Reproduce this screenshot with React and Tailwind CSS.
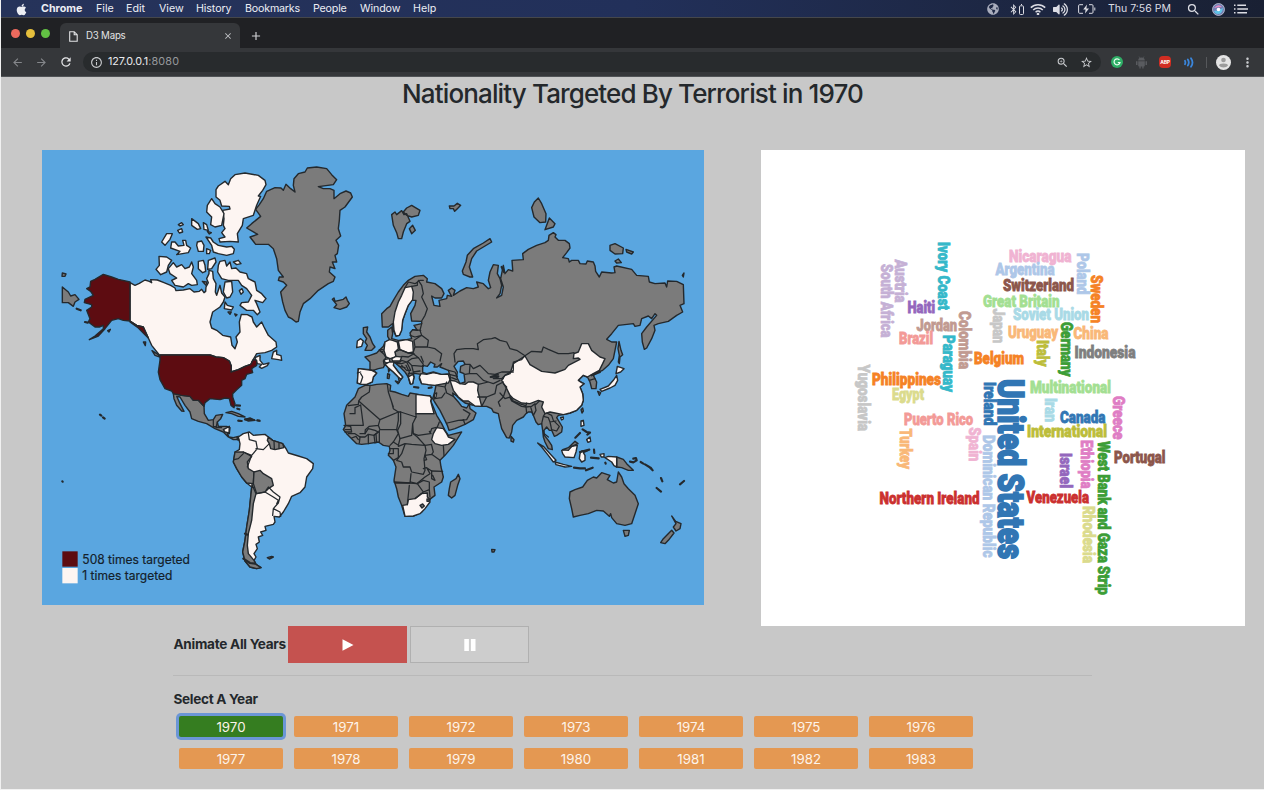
import React from "react";
import { FaApple, FaGlobeAmericas, FaBluetoothB, FaVolumeUp } from "react-icons/fa";
import {
  MdArrowBack, MdArrowForward, MdRefresh, MdInfoOutline, MdZoomIn, MdStarBorder, MdMoreVert, MdClose, MdAdd, MdSearch,
} from "react-icons/md";

/* Coastline points are kept in regional frames; each letter names a frame's origin. */
const FRAMES = { A: [0, 0], B: [540, 0], C: [900, 255], D: [1380, 0], E: [270, 585], F: [870, 675], G: [1380, 705] };

function toPath(src, closed) {
  return src
    .split("|")
    .map((part) => {
      let frame = FRAMES.A;
      const pts = [];
      part.trim().split(/\s+/).forEach((tok) => {
        if (/^[A-G]$/.test(tok)) {
          frame = FRAMES[tok];
          return;
        }
        const [x, y] = tok.split(",").map(Number);
        pts.push(`${x + frame[0]},${y + frame[1]}`);
      });
      return "M" + pts.join("L") + (closed ? "Z" : "");
    })
    .join("");
}

const EURASIA =
  "C 127,290 125,250 140,235 150,228 160,210 175,185 190,165 205,150 225,138 250,135 262,145 260,155 285,160 305,175 312,190 305,203 285,203 275,197 282,225 300,228 297,210 320,205 322,195 335,198 325,180 335,173 345,180 340,195 360,182 380,172 400,175 415,170 410,155 430,160 445,175 452,172 445,150 450,125 460,103 475,105 472,130 480,145 485,165 480,190 470,203 485,195 490,170 482,145 485,130 490,105 495,130 505,118 518,122 " +
  "D 38,372 36,345 70,343 68,325 85,312 110,300 135,292 145,285 147,270 160,262 168,268 165,275 175,285 195,285 208,295 210,308 200,322 188,337 205,340 208,350 215,345 235,345 240,355 258,356 262,347 280,350 285,362 287,378 298,395 305,380 335,383 345,382 342,365 350,362 395,372 410,390 445,393 448,410 465,415 495,413 500,425 503,407 530,408 550,418 552,475 540,480 548,500 530,510 505,528 475,535 462,540 465,555 455,580 440,608 433,612 427,590 425,565 440,545 470,510 465,505 455,520 445,512 425,520 420,540 405,543 400,535 355,540 335,565 320,582 335,590 350,590 345,615 340,640 325,660 308,675 295,680 280,690 290,710 288,730 275,730 270,710 265,700 262,695 250,690 235,705 245,712 252,715 240,725 248,745 " +
  "G 250,60 245,75 230,90 210,98 190,103 175,105 170,112 187,140 185,155 170,165 163,168 155,150 148,150 140,140 132,150 133,165 145,180 155,195 157,208 145,205 135,185 130,170 128,150 125,130 115,133 108,125 100,105 95,95 85,95 78,100 70,110 50,120 38,135 35,155 28,173 20,172 " +
  "F 515,175 508,145 505,130 490,125 485,115 470,108 450,108 430,105 405,98 392,88 378,75 368,68 370,78 385,95 395,108 410,113 418,100 420,115 438,128 430,148 405,162 375,175 357,180 352,165 345,150 330,120 314,95 308,85 314,65 318,45 " +
  "C 285,465 265,463 245,460 238,445 243,432 228,430 220,430 222,440 218,460 210,460 205,440 195,425 180,410 165,397 155,397 160,405 175,425 188,440 183,447 178,455 175,440 160,425 145,412 135,402 130,412 115,415 100,420 110,428 100,440 95,455 80,462 65,462 52,458 55,415 90,418 90,395 75,380 90,375 110,368 118,360 130,348 135,335 150,330 143,318 143,300 155,290 158,310 155,325 175,330 200,328 215,325 210,308 218,298 232,300 222,285 245,280 245,273 215,272 212,250 225,225 228,210 215,210 205,225 195,250 188,270 185,295 178,315 168,317 160,300 158,280 145,290";

const AFRICA =
  "F 105,45 85,55 75,80 50,105 42,130 47,165 40,178 50,190 65,205 80,220 95,222 115,220 145,215 160,225 178,228 180,240 175,255 190,270 198,290 192,330 200,355 205,380 215,405 225,438 250,437 275,425 290,405 302,385 315,375 312,350 335,335 340,320 333,290 330,270 345,255 370,225 395,185 375,190 355,195 345,180 335,160 320,135 310,110 302,92 306,84 300,76 285,77 265,72 240,68 235,78 215,72 195,65 180,62 182,45 170,40 140,42 125,45";

const CANADA =
  "A 270,412 285,420 298,414 315,404 328,408 335,412 332,403 352,404 372,412 392,420 405,428 408,436 430,434 450,430 462,440 478,438 485,432 492,442 497,438 498,425 505,412 500,400 507,385 507,375 518,378 520,400 528,415 526,440 530,450 540,420 545,443 555,455 550,470 540,485 518,500 510,530 515,548 530,555 548,570 572,575 576,600 585,610 592,590 588,575 600,560 598,530 604,507 622,508 636,515 640,530 650,545 665,530 672,545 685,570 708,590 710,605 695,615 675,622 650,625 635,650 660,635 650,655 642,645 632,657 615,663 595,673 573,680 574,663 568,647 550,637 528,635 510,629 358,629 335,600 325,578 310,545 290,540 270,527";

const GREENLAND =
  "B 80,248 95,235 122,213 107,192 118,178 130,160 140,138 165,127 183,128 190,135 198,117 212,130 225,140 220,120 222,100 235,85 255,80 262,68 290,65 320,70 335,88 350,103 340,118 295,124 310,130 330,130 342,135 342,160 360,145 378,137 392,143 397,155 375,185 360,195 358,225 355,250 362,272 348,285 356,300 352,325 345,330 350,350 337,350 345,370 330,365 328,380 345,395 340,408 325,415 295,435 270,460 250,475 240,500 235,528 228,530 215,520 205,515 195,495 188,470 182,440 200,420 190,410 175,405 178,395 190,395 175,375 170,340 160,310 145,297 107,297 90,275 113,267";

const ARCTIC_ISLANDS = [
  "A 528,133 535,122 555,108 565,118 572,100 585,88 615,83 655,90 675,105 678,118 668,135 655,152 662,153 650,180 645,195 640,210 610,220 607,240 592,265 595,290 570,288 540,290 537,280 555,275 545,262 555,250 550,240 552,220 548,195 570,191 568,183 545,182 540,165 528,155",
  "A 515,160 525,175 540,185 552,205 545,240 525,245 512,238 515,215 500,200 502,180",
  "A 498,275 512,278 520,290 535,300 560,305 575,303 583,312 580,325 560,330 535,325 520,320 515,300",
  "A 455,220 475,235 482,250 472,252 455,240 | A 490,232 500,238 505,255 492,252 | A 502,258 514,262 508,266 | A 415,238 425,232 430,238 420,242 | A 413,255 425,250 428,260 418,263",
  "A 365,290 380,265 397,265 390,282 375,300 | A 395,290 405,290 415,302 432,300 428,285 437,285 440,300 452,308 445,322 410,328 420,318 392,308 | A 472,290 485,287 492,300 490,318 475,318 470,300 | A 500,310 512,315 508,325 500,325",
  "A 357,333 380,335 395,345 385,360 380,380 362,388 348,372 358,360",
  "A 385,370 400,352 410,365 425,358 435,370 448,365 455,350 460,365 455,385 470,405 472,418 455,420 445,415 430,425 405,420 395,405 410,398 390,385",
  "A 475,348 490,345 495,360 497,378 488,382 475,370 | A 505,345 525,338 528,350 515,370 503,372 | A 487,408 500,410 498,420",
  "A 540,348 555,345 560,362 570,350 575,370 588,368 600,380 620,385 625,400 645,410 650,435 665,445 678,460 668,472 645,465 650,475 660,500 652,508 640,495 620,495 600,480 605,472 625,470 635,450 620,430 605,420 595,405 565,405 545,400 533,380 535,360",
  "A 580,350 595,345 603,355 590,358 | A 555,410 575,408 578,440 570,455 560,458 550,440 | A 598,436 606,430 610,440 603,447 | A 555,470 562,480 580,485 575,494 553,490 | A 564,500 574,500 570,507 | A 584,506 591,508 587,512",
];

const SOUTH_AMERICA =
  "E 325,290 340,280 358,275 370,285 405,282 415,290 428,300 458,310 468,325 475,338 505,347 530,355 550,370 548,385 530,410 525,440 510,457 485,468 475,490 460,515 448,530 432,528 435,545 430,552 405,558 408,570 392,575 398,585 385,590 388,605 378,612 382,625 372,640 378,650 372,660 378,672 393,682 380,685 360,680 345,662 338,635 345,600 350,560 358,510 365,440 350,428 335,410 320,385 310,365 315,335 328,328 330,310";

const GREY = [
  EURASIA,
  AFRICA,
  GREENLAND,
  "B 337,462 342,458 345,468 370,462 378,455 382,465 388,475 380,485 360,492 342,487 350,478",
  "B 515,208 525,200 530,208 545,196 552,208 560,205 570,228 560,235 550,260 545,280 535,280 530,262 520,240 | B 550,200 560,188 575,180 600,195 595,210 575,215 560,210 | B 568,250 578,240 586,255 575,265",
  "A 1228,182 1242,182 1252,174 1262,180 1252,190 1244,198 1240,190 1230,190",
  "C 390,140 370,132 367,122 378,95 382,75 400,55 430,38 450,25 455,35 435,47 410,62 395,85 388,110 398,140",
  "D 115,158 125,175 138,205 137,230 120,232 102,215 95,187 103,170 | D 148,218 165,235 160,245 135,253 | D 330,300 345,295 370,308 368,325 345,326 330,315 | D 378,312 400,320 395,326 380,320 | D 345,347 355,341 364,352 350,353 | D 547,390 552,383 550,395",
  "D 357,588 363,615 368,628 360,635 358,655 355,650 358,630 354,610",
  "C 70,292 83,290 80,305 90,320 98,340 105,350 95,360 75,360 82,345 75,335 80,325 70,310",
  "C 143,430 149,432 147,445 142,444 | C 145,415 149,418 146,425 | C 166,452 178,456 174,460",
  "F 385,312 390,325 383,345 375,375 365,383 355,375 358,355 362,335 378,325",
  "F 485,537 495,538 492,545 486,545",
  "G 210,335 225,328 248,320 262,300 280,290 290,293 305,277 330,285 322,298 340,308 350,305 355,275 365,290 372,310 385,325 405,345 415,370 405,400 395,430 375,435 350,430 335,412 332,400 328,408 310,392 290,390 265,400 240,405 220,410 215,385 208,355",
  "G 370,450 388,450 385,465 375,468 | G 515,407 527,423 543,430 540,445 528,452 520,440 528,430 | G 515,450 522,458 505,480 495,490 482,487 490,475",
  "G 350,230 370,237 380,250 400,270 385,270 365,262 350,260 | G 33,168 42,178 40,185 33,182 | G 243,88 248,83 250,92 246,98",
  "E 130,160 155,165 180,168 190,180 205,180 215,190 222,198 223,220 235,240 250,238 258,225 278,222 272,235 262,245 265,258 290,258 300,262 298,280 292,280 297,290 310,292 325,288 325,298 310,298 295,290 280,275 255,265 230,250 205,243 185,235 180,215 165,195 150,170 140,168 150,190 162,213 155,212 140,195 132,175",
  "E 288,217 305,213 325,220 345,230 325,228 305,220 | E 345,237 360,233 375,240 355,242 | E 382,240 390,242 | E 325,241 335,242 | E 412,652 425,648 430,650 418,656",
  "A 67,425 85,440 92,452 105,448 117,462 105,470 100,483 85,472 67,472 | A 67,383 78,386 75,393 66,393",
  "A 310,590 317,590 316,601 | A 336,616 355,628 362,636 345,630",
];

const PALE = [
  CANADA,
  ...ARCTIC_ISLANDS,
  SOUTH_AMERICA,
  "E 375,52 390,45 390,60 400,72 417,68 412,76 395,84 388,80 395,72 382,70 | E 425,55 430,35 440,30 440,42 453,46 455,60 445,58",
  "E 280,268 298,258 297,278 285,275",
  "F 258,72 300,77 304,84 302,92 312,130 258,130 | F 314,70 320,68 318,80 312,86",
  "F 320,172 340,175 350,190 355,200 375,207 355,222 335,225 315,220 305,208 310,190",
  "F 218,405 232,403 235,388 255,385 275,370 292,368 292,380 298,385 300,395 285,415 270,430 250,437 225,438",
  "C 238,440 243,430 260,432 280,427 305,432 325,432 330,448 325,458 300,462 285,465 265,463 245,460",
  "C 330,450 345,452 360,460 375,462 385,455 400,455 415,462 413,480 418,500 425,528 405,527 385,512 370,512 355,500 340,480 335,465",
  "C 195,172 215,168 220,185 218,208 205,225 195,250 188,270 185,300 178,315 168,317 162,300 160,275 165,245 175,215 185,195",
  "C 135,335 148,328 158,330 172,335 175,355 165,365 168,380 150,385 138,380 132,360 | C 175,332 200,328 218,333 220,365 205,368 180,358",
  "C 155,385 168,378 185,380 180,392 158,392 | C 133,388 148,385 150,396 135,398 | C 118,358 130,358 128,366",
  "C 135,402 148,395 162,395 160,405 175,425 188,440 183,447 175,440 160,425 145,412 | C 205,440 218,432 222,440 218,460 212,462",
  "C 55,415 95,420 110,428 100,440 97,455 80,462 65,462 52,458 | C 52,332 62,325 70,332 65,348 50,352",
  "D 75,632 90,658 125,678 165,683 195,672 205,660 240,642 235,638 220,640 222,625 235,620 245,595 265,595 275,615 300,635 315,640 308,655 298,675 280,685 262,695 250,690 235,705 245,712 252,715 240,725 248,745 G 250,60 245,75 230,90 210,98 190,103 165,98 150,95 135,100 125,80 130,65 115,60 90,70 65,68 40,55 30,45 D 20,730 5,705 15,690 30,685 40,655",
  "D 352,663 372,670 362,680 348,685 | D 350,690 353,705 345,720 330,728 305,738 300,732 325,722 340,705 | D 293,738 302,742 298,750",
  "G 315,232 325,228 350,230 350,260 342,256 335,245 | G 300,222 312,220 312,230 304,230 | G 113,188 130,198 150,220 168,240 160,245 145,225 125,200 | G 165,245 190,252 215,258 195,260 168,253 | G 185,210 200,208 215,198 232,195 228,215 222,232 195,230 188,220",
  "G 240,220 245,212 265,210 250,217 255,225 255,240 245,245 238,235 | G 243,122 250,120 252,135 243,138 | G 260,178 270,170 272,183 264,186 | G 182,112 190,110 190,116 185,119",
];

const GREY_TOP = [
  "E 315,335 340,335 365,348 352,365 355,385 372,395 370,430 350,428 335,410 320,385 310,365",
  "E 372,395 390,390 400,400 425,415 430,435 415,445 405,455 380,460 370,430",
  "E 366,432 378,460 370,490 365,540 355,580 352,615 355,640 372,660 378,672 393,682 380,685 360,680 345,662 338,635 345,600 350,560 358,510",
  "E 415,290 428,300 458,310 462,322 435,328 422,325 418,310 412,300",
  "F 270,405 278,401 283,407 276,413 | F 291,386 297,386 297,393 291,393",
  "G 188,208 205,202 225,183 234,190 215,198 205,210",
];

const RED = [
  "E 90,44 240,44 258,50 280,52 298,62 304,78 303,95 325,88 345,78 362,72 370,58 380,60 380,75 365,85 368,97 350,102 345,115 335,120 335,135 320,148 308,160 308,170 315,190 312,202 303,195 298,175 285,173 270,178 240,175 225,187 222,198 215,190 205,180 190,180 180,168 155,165 130,160 125,152 105,145 90,118 85,95 90,60",
  "A 270,410 235,402 215,395 190,387 165,402 152,408 150,425 140,430 152,438 160,450 135,462 133,472 155,478 155,485 140,495 150,520 145,530 165,545 178,545 190,540 190,550 165,572 148,583 175,572 195,550 215,525 235,520 250,525 270,527 290,540 310,545 325,578 315,568 295,548 270,530 | A 203,556 211,552 207,560",
];

const WATER = [
  "C 248,405 262,408 272,395 285,402 282,410 292,410 305,400 300,410 325,420 328,430 305,432 280,425 260,430 248,426",
  "C 355,393 370,392 375,402 362,408 360,425 372,430 375,455 360,460 350,440 352,425 342,408",
];

const BORDERS = [
  "F 120,45 118,65 95,80 86,92 150,148 205,125 | F 86,92 85,102 55,106 | F 60,130 75,130 75,112 92,104 100,165 50,165 | F 150,148 145,165 118,168 106,178 105,190 90,190 | F 190,110 185,95 175,65 172,42 | F 185,95 190,115 205,125 212,125 258,140 258,130 | F 205,125 205,150 200,178 150,178 145,165",
  "F 212,125 212,160 203,180 210,205 245,195 248,160 258,140 | F 258,130 312,130 | F 248,160 250,190 265,195 300,190 305,175 322,170 328,155 | F 148,215 148,180 | F 200,178 205,190 190,215 180,225 | F 135,218 132,195 145,185 | F 140,217 138,192 | F 115,220 115,195 | F 88,218 90,200",
  "F 105,190 115,175 135,180 145,185 132,195 115,192 105,200 90,200 | F 42,165 62,168 65,185 45,185 | F 45,178 62,178 | F 55,190 75,190 90,200 | F 65,203 78,198 85,208 | F 190,215 205,225 210,205 | F 180,235 205,235 205,262 190,270 | F 175,250 190,250 190,238 | F 205,228 225,220 245,222 285,225 262,200 250,190",
  "F 225,222 215,250 200,270 215,275 220,290 240,290 245,305 280,312 285,300 282,265 288,240 285,225 305,222 | F 192,335 240,338 243,310 | F 243,335 260,340 285,320 300,310 290,292 280,295 | F 285,255 305,252 330,270 | F 290,292 305,302 338,303 | F 305,225 310,245 305,252 | F 340,225 342,255",
  "F 195,338 240,338 262,340 | F 238,345 232,403 | F 255,385 280,365 262,340 280,330 298,335 298,358 280,365 | F 305,302 305,325 315,330 308,315 | F 298,358 300,380 | F 298,183 303,190 | F 285,255 290,268 283,270",
  "F 318,45 345,50 350,35 | F 345,50 350,68 370,78 | F 314,85 335,82 345,68 | F 352,158 385,150 410,148 420,130 400,118 | F 405,162 400,148",
  "C 195,172 205,155 225,160 240,150 250,150 | C 235,150 245,165 250,190 245,200 262,235 255,255 245,272 | C 215,168 232,165 232,155 | C 245,280 240,300 245,315 265,330 262,350 225,350 222,330 245,315 | C 218,298 242,300 | C 210,315 225,320 245,315 | C 262,350 285,355 305,370 300,392 | C 220,365 225,350 | C 220,370 235,382 250,402",
  "C 165,365 180,358 205,368 222,370 205,380 185,378 | C 185,390 200,395 215,385 235,382 | C 205,395 215,405 250,408 | C 165,397 180,395 185,390 | C 170,400 185,400 200,395 212,420 200,420 185,405 | C 178,408 195,412 | C 198,405 208,425 205,440 | C 215,405 220,425 240,422 | C 205,430 222,428 | C 62,430 68,440 62,458 | C 62,425 52,428 | C 102,420 88,418 | C 118,360 132,372 138,382 130,392 132,402 | C 243,378 250,395",
  "C 325,420 345,425 352,440 | C 328,432 352,438 | C 335,442 350,448 | C 345,395 342,370 350,358 375,355 400,355 415,358 412,340 430,328 455,325 465,322 480,330 500,335 510,355 530,360 555,376 545,388 520,395 520,420 495,435 485,445",
  "C 375,402 390,402 400,415 420,405 445,430 465,432 485,425 520,425 | C 390,405 388,430 375,432 | C 388,430 410,430 430,450 445,455 415,462 | C 445,430 465,432 475,440 460,445 490,445 | C 445,455 460,460 480,450 | C 413,500 440,500 465,490 470,465 490,455 | C 425,528 440,500 | C 490,460 500,470 490,500 475,515 480,528 | C 455,438 475,432 | C 330,432 332,450",
  "C 555,376 D 95,618 125,620 130,605 145,612 175,625 205,625 222,622",
  "G 30,48 40,62 65,72 78,76 80,68 | G 30,52 35,62 65,78 78,80 95,78 105,70 | G 78,80 80,98 | G 92,80 98,100 | G 100,105 108,90 105,75 118,62 | G 125,130 130,108 135,100 | G 130,108 145,112 150,125 168,122 | G 140,98 155,105 160,120 178,138 170,152 155,148 150,125 | G 0,38 15,55 30,50 | G 262,690 270,700 | G 133,160 145,170",
  "E 340,340 325,355 312,358 | E 432,303 433,325 | E 447,308 447,325 | E 355,278 358,298 378,303 382,325 365,345 340,335 | E 378,325 400,328 418,310 | E 405,455 430,470 445,480 440,490 | E 408,450 415,440 430,455 450,470 445,488 430,505 428,525 | E 430,505 450,515 452,528 | E 365,345 352,380 | E 250,238 250,258 265,262 | E 262,245 258,262 275,262 | E 380,460 405,455",
  "D 285,700 268,705",
];

const SPECKS =
  "G 400,235 408,233 410,240 400,246 390,244 | G 422,245 430,250 | G 435,252 448,260 458,270 452,262 | G 483,293 487,303 | G 470,323 483,334 | G 540,312 552,302 | G 282,208 283,218 | G 273,232 296,234 | G 222,262 240,264 255,264 | G 258,270 278,262 | G 248,147 260,155 270,157 262,163 | G 226,172 240,158 | G 240,215 268,208 | G 316,247 317,250 | F 252,50 265,52 | F 296,53 305,51 | A 110,490 122,495 | A 135,530 143,532 | E 318,195 330,196 | E 322,205 328,207 | E 382,240 388,241 | E 325,241 335,242 | E 345,237 372,239 | A 180,808 184,811 | A 189,816 194,820 | A 67,1008 68,1009 | E 322,292 325,298 | E 345,580 352,583 | E 340,655 360,668 375,670 | D 275,690 300,680 | C 485,110 492,125 | C 452,440 475,438";

function Shapes({ list, className }) {
  return (
    <g className={className}>
      {list.map((s, i) => (
        <path key={i} d={toPath(s, true)} />
      ))}
    </g>
  );
}

function WorldMap() {
  return (
    <svg className="block h-[455px] w-[662px] shrink-0 bg-[#5aa6e0]" viewBox="6 14 1986 1365" strokeLinejoin="round" strokeLinecap="round">
      <g stroke="#24292d" strokeWidth="4.2">
        <Shapes list={GREY} className="fill-[#7b7b7b]" />
        <Shapes list={PALE} className="fill-[#fdf5f2]" />
        <Shapes list={GREY_TOP} className="fill-[#7b7b7b]" />
        <Shapes list={RED} className="fill-[#5d0c11]" />
        <Shapes list={WATER} className="fill-[#5aa6e0]" />
        <g fill="none" strokeWidth="3.8">
          {BORDERS.map((b, i) => (
            <path key={i} d={toPath(b, false)} />
          ))}
        </g>
        <path d={toPath(SPECKS, false)} fill="none" strokeWidth="6.5" />
      </g>
      <rect x="67" y="1218" width="46" height="46" className="fill-[#5d0c11]" />
      <rect x="67" y="1268" width="46" height="46" className="fill-[#fdf5f2]" />
      <g fontFamily="Inter, sans-serif" fontSize="37.5" fill="#14212b" stroke="#14212b" strokeWidth="0.6">
        <text x="127" y="1255" textLength="323" lengthAdjust="spacingAndGlyphs">508 times targeted</text>
        <text x="127" y="1305" textLength="270" lengthAdjust="spacingAndGlyphs">1 times targeted</text>
      </g>
    </svg>
  );
}

/* word, x, baseline, length, colour */
const ACROSS = [
  ["Nicaragua", 1009, 262, 62.5, "#f0b3d2"],
  ["Argentina", 995.5, 275.3, 59, "#aec7e8"],
  ["Switzerland", 1003, 290.7, 71, "#8c564b"],
  ["Great Britain", 983, 306.5, 76.5, "#a3df92"],
  ["Soviet Union", 1013, 319.5, 76, "#a9dae6"],
  ["Haiti", 907.5, 313.3, 27.5, "#9467bd"],
  ["Jordan", 916.5, 330.7, 40.5, "#c19a91"],
  ["Uruguay", 1008, 338.2, 50, "#f9b878"],
  ["China", 1073.5, 338.8, 35, "#f9b878"],
  ["Brazil", 899, 344, 34, "#f39a97"],
  ["Belgium", 974, 364.3, 50, "#f58225"],
  ["Indonesia", 1074.5, 358.3, 61, "#7f7f7f"],
  ["Philippines", 872, 384.6, 69, "#f58225"],
  ["Egypt", 892, 400, 32, "#dbdb8d"],
  ["Multinational", 1030, 393.3, 81, "#a3df92"],
  ["Puerto Rico", 904, 425, 69, "#f39a97"],
  ["Canada", 1060, 422.6, 45.5, "#3176b4"],
  ["International", 1027, 436.6, 80, "#bcbd3a"],
  ["Portugal", 1114, 462.8, 51.5, "#8c564b"],
  ["Northern Ireland", 879.5, 504.2, 100, "#cb302f"],
  ["Venezuela", 1026.5, 503, 62.5, "#cb302f"],
];

const DOWN = [
  ["Ivory Coast", 938, 242, 68, "#35b8c9"],
  ["Austria", 895.2, 259.5, 43, "#c5b0d5"],
  ["South Africa", 880.8, 264, 73.5, "#c5b0d5"],
  ["Colombia", 958.7, 311, 58, "#c19a91"],
  ["Paraguay", 943, 335, 57, "#35b8c9"],
  ["Japan", 992.7, 308.5, 34.5, "#c7c7c7"],
  ["Poland", 1077, 253, 41.5, "#aec7e8"],
  ["Sweden", 1091.4, 275, 48, "#f58225"],
  ["Italy", 1037.4, 340, 26.5, "#bcbd3a"],
  ["Germany", 1060.5, 322, 54.5, "#3c9d36"],
  ["Ireland", 983.5, 382, 43.5, "#3176b4"],
  ["Yugoslavia", 858, 364.5, 66.5, "#c7c7c7"],
  ["Iran", 1044.6, 398, 24, "#a9dae6"],
  ["Greece", 1113.3, 396, 43.5, "#df7dc4"],
  ["Turkey", 899.5, 428.5, 40.5, "#f9b878"],
  ["Spain", 969.4, 427.3, 34, "#f0b3d2"],
  ["Dominican Republic", 983.4, 435, 122.5, "#aec7e8"],
  ["Israel", 1060, 453, 35, "#9467bd"],
  ["Ethiopia", 1080.8, 440, 48.5, "#df7dc4"],
  ["Rhodesia", 1082.8, 506, 57, "#dbdb8d"],
  ["West Bank and Gaza Strip", 1097.5, 441.3, 153.5, "#3c9d36"],
];

function WordCloud() {
  return (
    <svg className="block h-[476px] w-[484px] shrink-0 bg-white" viewBox="761 150 484 476" fontFamily="Roboto, sans-serif" fontWeight="900" fontSize="16.8">
      {ACROSS.map(([word, x, y, len, colour]) => (
        <text key={word} x={x} y={y} textLength={len} lengthAdjust="spacingAndGlyphs" fill={colour} stroke={colour} strokeWidth="0.8">
          {word}
        </text>
      ))}
      {DOWN.map(([word, x, y, len, colour]) => (
        <text key={word} transform={`translate(${x} ${y}) rotate(90)`} textLength={len} lengthAdjust="spacingAndGlyphs" fill={colour} stroke={colour} strokeWidth="0.8">
          {word}
        </text>
      ))}
      <text transform="translate(997.5 379) rotate(90)" fontSize="36" textLength="180" lengthAdjust="spacingAndGlyphs" fill="#3176b4" stroke="#3176b4" strokeWidth="1.8">
        United States
      </text>
    </svg>
  );
}

function MenuBar() {
  return (
    <div className="flex h-[17px] items-center bg-linear-to-r from-[#26335a] via-[#22305a] to-[#192033] pt-[1px] text-[10.7px] leading-none text-[#eceef4]">
      <span className="ml-[14px] w-[26px]"><FaApple className="size-[13px]" /></span>
      <span className="w-[55px] font-bold">Chrome</span>
      <span className="w-[30px]">File</span>
      <span className="w-[33px]">Edit</span>
      <span className="w-[37px]">View</span>
      <span className="w-[49px] tracking-[-0.1px]">History</span>
      <span className="w-[68px] tracking-[-0.2px]">Bookmarks</span>
      <span className="w-[47px] tracking-[-0.2px]">People</span>
      <span className="w-[53px] tracking-[-0.1px]">Window</span>
      <span>Help</span>
      <div className="ml-auto flex items-center pr-[12px] text-[#dcdde4]">
        <span className="flex w-[18px] justify-center text-[#a9adbd]"><FaGlobeAmericas className="size-[12px]" /></span>
        <span className="flex w-[27px] items-center justify-center">
          <FaBluetoothB className="size-[11px]" />
          <svg className="h-[11px] w-[5px]" viewBox="0 0 5 11" fill="none" stroke="currentColor"><rect x=".5" y="1.8" width="4" height="8.7" rx="1" /><path d="M2 .5h1" /></svg>
        </span>
        <span className="flex w-[18px] justify-center">
          <svg className="h-[12px] w-[16px]" viewBox="0 0 16 12" fill="none" stroke="currentColor" strokeWidth="1.5">
            <path d="M.8 4.6a10.3 10.3 0 0 1 14.4 0M3.2 7a6.9 6.9 0 0 1 9.6 0M5.6 9.2a3.5 3.5 0 0 1 4.8 0" /><circle cx="8" cy="11" r=".6" />
          </svg>
        </span>
        <span className="flex w-[27px] justify-center"><FaVolumeUp className="size-[15px]" /></span>
        <span className="flex w-[25px] justify-center">
          <svg className="h-[10px] w-[18px]" viewBox="0 0 18 10" fill="none" stroke="currentColor">
            <path d="M5 .7H1.6Q.6.7.6 1.7v6.6q0 1 1 1H5M11 .7h3q1 0 1 1v6.6q0 1-1 1h-3M16.8 3.5v3" /><path d="M9 .4 5.2 5.6h2.4L7 9.6l4-5.2H8.4z" fill="currentColor" stroke="none" />
          </svg>
        </span>
        <span className="w-[81px] text-center text-[10.5px] whitespace-nowrap">Thu 7:56 PM</span>
        <span className="flex w-[26px] justify-center"><MdSearch className="size-[15px]" /></span>
        <span className="flex w-[24px] justify-center">
          <svg className="size-[13px]" viewBox="0 0 13 13"><circle cx="6.5" cy="6.5" r="6" fill="#7280b4" stroke="#d7d9e6" strokeWidth=".7" /><path d="M2 5q4-5 8-1-4 0-8 1" fill="#e58ac0" /><path d="M2 8q5 0 9-3-1 6-5 6-3 0-4-3" fill="#5fc3e8" /><circle cx="6.5" cy="6.5" r="1.8" fill="#fff" /></svg>
        </span>
        <span className="flex w-[22px] justify-center">
          <svg className="h-[10px] w-[14px]" viewBox="0 0 14 10" stroke="currentColor" strokeWidth="1.5"><path d="M0 1.2h1.5M3.3 1.2H12M0 5h1.5M3.3 5H14M0 8.8h1.5M3.3 8.8H13" /></svg>
        </span>
      </div>
    </div>
  );
}

function BrowserChrome() {
  return (
    <>
      <div className="flex h-[31px] items-end border-t border-[#45474b] bg-[#202124]">
        <div className="flex h-[30px] items-center gap-[6px] pl-[10px]">
          <span className="size-[9px] rounded-full bg-[#ed6a5e]" />
          <span className="size-[9px] rounded-full bg-[#e5bf3c]" />
          <span className="size-[9px] rounded-full bg-[#62c144]" />
        </div>
        <div className="ml-[10px] flex h-[25px] w-[180px] items-center rounded-t-[6px] bg-[#35373a] pt-[1px] pl-[9px] pr-[7px] text-[9.7px] leading-none text-[#e2e3e5]">
          <svg className="h-[11px] w-[9px]" viewBox="0 0 9 11" fill="none" stroke="currentColor" strokeWidth="1.1"><path d="M.7.7h4.5l3 3v6.6H.7zM5.2.7v3h3" /></svg>
          <span className="ml-[8px] tracking-[-0.2px]">D3 Maps</span>
          <MdClose className="ml-auto size-[10px] text-[#c4c6c9]" />
        </div>
        <div className="flex h-[25px] items-center pt-[1px] pl-[9px] text-[#d0d1d4]"><MdAdd className="size-[14px]" /></div>
      </div>
      <div className="flex h-[29px] items-center border-b border-[#505356] bg-[#35373a] text-[#c9cbce]">
        <span className="flex w-[33px] justify-center text-[#85878b]"><MdArrowBack className="size-[13px]" /></span>
        <span className="flex w-[15px] justify-center text-[#85878b]"><MdArrowForward className="size-[13px]" /></span>
        <span className="flex w-[34px] justify-center text-[#e5e6e8]"><MdRefresh className="size-[14px]" /></span>
        <div className="flex h-[20px] flex-1 items-center rounded-full bg-[#282b2d] pl-[7px] pr-[3px]">
          <MdInfoOutline className="size-[13px]" />
          <span className="ml-[5px] pt-[1px] text-[10.8px] leading-none tracking-[-0.1px] text-[#e8eaed]">127.0.0.1<span className="tracking-[0.2px] text-[#96999c]">:8080</span></span>
          <span className="ml-auto flex w-[24px] justify-center"><MdZoomIn className="size-[13px]" /></span>
          <span className="flex w-[24px] justify-center"><MdStarBorder className="size-[13px]" /></span>
        </div>
        <span className="ml-[4px] flex w-[24px] justify-center">
          <span className="flex size-[12px] items-center justify-center rounded-full bg-[#2fae66]">
            <svg className="size-[8px]" viewBox="0 0 8 8" fill="none" stroke="#e8fff0" strokeWidth="1.2"><path d="M6.5 2A3 3 0 1 0 7 4.5H4.8" /></svg>
          </span>
        </span>
        <span className="flex w-[24px] justify-center">
          <svg className="h-[13px] w-[13px]" viewBox="0 0 13 13" fill="#595b5f">
            <path d="M3.2 4.6a3.3 3.2 0 0 1 6.6 0zM3.200 5.200h6.600v4.500q0 .8-.8.8H8.600v2H7.300v-2H5.700v2H4.400v-2H4q-.8 0-.8-.8zM1 5.300h1.500v3.700H1zM10.500 5.300H12v3.700h-1.500z" />
            <path d="M4 .5l1 1.500M9 .5 8 2" stroke="#595b5f" strokeWidth=".7" />
          </svg>
        </span>
        <span className="flex w-[24px] justify-center">
          <span className="flex size-[12px] items-center justify-center rounded-[4px] bg-[#d02d22] text-[5px] leading-none font-bold tracking-[-0.2px] text-white">ABP</span>
        </span>
        <span className="flex w-[24px] justify-center">
          <svg className="h-[11px] w-[11px]" viewBox="0 0 11 11" fill="none" stroke="#3a86dc" strokeWidth="1.8" strokeLinecap="round"><path d="M1 3.8q.8 1.700 0 3.400M3.800 2.500q2 3 0 6M7 1.200q3 4.300 0 8.600" /></svg>
        </span>
        <span className="flex w-[10px] justify-center"><span className="h-[11px] w-px bg-[#56585b]" /></span>
        <span className="flex w-[24px] justify-center">
          <svg className="size-[15px]" viewBox="0 0 15 15"><circle cx="7.5" cy="7.5" r="7.5" fill="#e4e4e4" /><circle cx="7.5" cy="5" r="2.3" fill="#9b9b9b" /><path d="M3 10.500q0-2 4.500-2t4.500 2q-1.500 2-4.500 2t-4.500-2" fill="#9b9b9b" /></svg>
        </span>
        <span className="mr-[5px] flex w-[24px] justify-center"><MdMoreVert className="size-[15px]" /></span>
      </div>
    </>
  );
}

const YEARS = [1970, 1971, 1972, 1973, 1974, 1975, 1976, 1977, 1978, 1979, 1980, 1981, 1982, 1983];

function Controls() {
  return (
    <div className="ml-[172px] w-[919px] text-[#24282c]">
      <div className="flex h-[37px] items-center">
        <span className="w-[115px] pl-[0.5px] text-[13.6px] font-bold tracking-[-0.28px] whitespace-nowrap">Animate All Years</span>
        <button className="flex h-[37px] w-[119px] items-center justify-center bg-[#c5524f]">
          <svg className="h-[12px] w-[12px]" viewBox="0 0 12 12" fill="#fff"><path d="M.5.3 11.500 6 .5 11.700z" /></svg>
        </button>
        <button className="ml-[3px] flex h-[37px] w-[119px] items-center justify-center border border-[#b0b0b0] bg-[#cdcdcd]">
          <svg className="h-[12px] w-[12px]" viewBox="0 0 12 12" fill="#fff"><path d="M.3 0h4.600v12H.3zM6.900 0h4.600v12H6.900z" /></svg>
        </button>
      </div>
      <div className="mt-[12px] h-px bg-[#b9b9b9]" />
      <div className="mt-[13px] h-[20px] pl-[0.5px] text-[13.6px] leading-[20px] font-bold tracking-[-0.32px]">Select A Year</div>
      <div className="mt-[7px] ml-[6px] grid w-[794px] grid-cols-7 gap-x-[11px] gap-y-[11px]">
        {YEARS.map((y) => (
          <button
            key={y}
            className={
              "flex h-[21px] items-center justify-center rounded-[2px] pt-[3px] text-[13.3px] leading-none text-[#fdf3ea] " +
              (y === 1970 ? "bg-[#357d20] ring-3 ring-[#6b96d6]" : "bg-[#e49852]")
            }
          >
            {y}
          </button>
        ))}
      </div>
    </div>
  );
}

export default function App() {
  return (
    <div className="h-[790px] w-[1264px] overflow-hidden border-b border-l border-[#f1f1f1] bg-[#c8c8c8] font-['Inter',sans-serif]">
      <MenuBar />
      <BrowserChrome />
      <h1 className="mt-[1px] h-[31px] text-center text-[26px] leading-[31px] font-medium tracking-[-0.87px] text-[#24282c]">
        Nationality Targeted By Terrorist in 1970
      </h1>
      <div className="mt-[41px] flex items-start gap-[57px] pl-[41px]">
        <WorldMap />
        <WordCloud />
      </div>
      <Controls />
    </div>
  );
}
